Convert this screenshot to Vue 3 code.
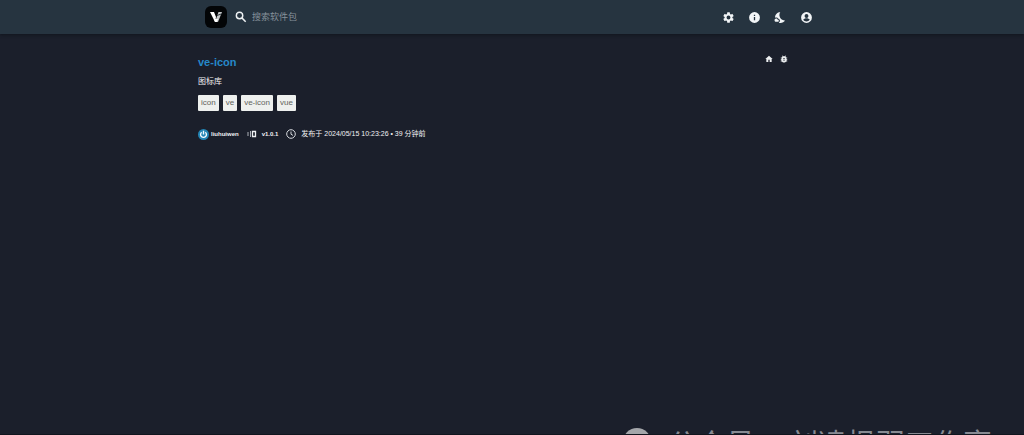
<script setup>
import { ref } from 'vue'

const query = ref('')
const tags = ['icon', 've', 've-icon', 'vue']
const actions = [
  { label: '设置', d: 'M19.14 12.94a7 7 0 0 0 0-1.88l2.03-1.58a.5.5 0 0 0 .12-.61l-1.92-3.32a.5.5 0 0 0-.59-.22l-2.39.96a7 7 0 0 0-1.62-.94l-.36-2.54a.5.5 0 0 0-.48-.41h-3.84a.5.5 0 0 0-.47.41l-.36 2.54a7 7 0 0 0-1.62.94l-2.39-.96a.5.5 0 0 0-.59.22L2.74 8.87a.5.5 0 0 0 .12.61l2.03 1.58a7 7 0 0 0 0 1.88l-2.03 1.58a.5.5 0 0 0-.12.61l1.92 3.32c.12.22.37.29.59.22l2.39-.96c.5.38 1.03.7 1.62.94l.36 2.54c.05.24.24.41.48.41h3.84c.24 0 .44-.17.47-.41l.36-2.54a7 7 0 0 0 1.62-.94l2.39.96c.22.08.47 0 .59-.22l1.92-3.32a.5.5 0 0 0-.12-.61zM12 15.6a3.6 3.6 0 1 1 0-7.2 3.6 3.6 0 0 1 0 7.2z' },
  { label: '信息', d: 'M12 2a10 10 0 1 0 0 20 10 10 0 0 0 0-20zm1.2 15h-2.4v-6h2.4zm0-8h-2.4V6.8h2.4z' },
  { label: '切换主题', d: 'M11.1 12.08C8.77 7.57 10.6 3.6 11.63 2.01 6.27 2.2 1.98 6.59 1.98 12c0 .14.02.28.02.42C2.62 12.15 3.29 12 4 12c1.66 0 3.18.83 4.1 2.15C9.77 14.63 11 16.17 11 18c0 1.52-.87 2.83-2.12 3.51.98.32 2.03.5 3.11.5 3.5 0 6.58-1.8 8.37-4.52-2.35.23-6.98-.97-9.26-5.41zM7 16h-.18C6.4 14.84 5.3 14 4 14c-1.66 0-3 1.34-3 3s1.34 3 3 3h3c1.1 0 2-.9 2-2s-.9-2-2-2z' },
  { label: '账户', d: 'M12 2a10 10 0 1 0 0 20 10 10 0 0 0 0-20zm0 3.5a3.6 3.6 0 1 1 0 7.2 3.6 3.6 0 0 1 0-7.2zm0 14c-2.5 0-4.7-1.2-6-3.2.1-2 4-3.1 6-3.1s5.9 1.1 6 3.1a7.2 7.2 0 0 1-6 3.2z' }
]
</script>

<template>
  <div class="page">
    <header class="topbar">
      <div class="topbar-inner">
        <a class="logo" href="#" aria-label="首页">
          <svg viewBox="0 0 22 22">
            <rect width="22" height="22" rx="6" fill="#030507" />
            <path d="M5 6h4l2 5-1 5z" fill="#fff" />
            <path d="M10 16l3.5-10H17l-4 10z" fill="#c4c7c9" />
            <path d="M9 13h4l-1.2 3H10z" fill="#fff" />
            <path d="M12 9.5l4.2-1.5" stroke="#30383d" />
          </svg>
        </a>
        <form class="search" role="search" @submit.prevent>
          <svg viewBox="0 0 24 24" class="search-icon" aria-hidden="true">
            <circle cx="9.5" cy="9.5" r="5.5" />
            <path d="M13.5 13.5l6.5 6.5" />
          </svg>
          <input v-model="query" type="text" placeholder="搜索软件包" aria-label="搜索软件包" />
        </form>
        <nav class="actions">
          <button v-for="a in actions" :key="a.label" type="button" :aria-label="a.label">
            <svg viewBox="0 0 24 24"><path :d="a.d" fill-rule="evenodd" /></svg>
          </button>
        </nav>
      </div>
    </header>

    <main class="package">
      <div class="title-row">
        <h1>ve-icon</h1>
        <div class="links">
          <a href="#" aria-label="主页"><svg viewBox="0 0 24 24"><path d="M10 21v-7h4v7h6v-9h3L12 2 1 12h3v9z" /></svg></a>
          <a href="#" aria-label="问题反馈"><svg viewBox="2 2 20 20"><path d="M20 8h-2.81c-.45-.78-1.07-1.45-1.82-1.96L17 4.41 15.59 3l-2.17 2.17C12.96 5.06 12.49 5 12 5s-.96.06-1.41.17L8.41 3 7 4.41l1.62 1.63C7.88 6.55 7.26 7.22 6.81 8H4v2h2.09c-.05.33-.09.66-.09 1v1H4v2h2v1c0 .34.04.67.09 1H4v2h2.81c1.04 1.79 2.97 3 5.19 3s4.15-1.21 5.19-3H20v-2h-2.09c.05-.33.09-.66.09-1v-1h2v-2h-2v-1c0-.34-.04-.67-.09-1H20V8zm-6 8h-4v-2h4v2zm0-4h-4v-2h4v2z" /></svg></a>
        </div>
      </div>
      <p class="description">图标库</p>
      <ul class="tags">
        <li v-for="tag in tags" :key="tag">{{ tag }}</li>
      </ul>
      <div class="meta">
        <span class="meta-item author">
          <svg viewBox="0 0 12 12" aria-hidden="true">
            <circle cx="6" cy="6" r="6" fill="#2385b5" />
            <path d="M4 3.5a3.2 3.2 0 1 0 4 0M6 2v4" fill="none" stroke="#f5fbff" stroke-width="1.5" />
          </svg>
          liuhuiwen
        </span>
        <span class="meta-item version">
          <svg viewBox="0 0 10 8" aria-hidden="true">
            <path d="M5.5 1.5h3v5h-3z" fill="none" stroke="#eef0f2" stroke-width="1.3" />
            <path d="M3.5 1v6M1 2v4" fill="none" stroke="#adb1b8" />
          </svg>
          v1.0.1
        </span>
        <span class="meta-item published">
          <svg viewBox="0 0 10 10" aria-hidden="true">
            <path d="M5 .7a4.3 4.3 0 1 0 0 8.6 4.3 4.3 0 0 0 0-8.6M5 2.5v2.7l2 1.2" fill="none" stroke="#d5d8dc" />
          </svg>
          发布于 2024/05/15 10:23:26 • 39 分钟前
        </span>
      </div>
    </main>

    <div class="watermark">
      <svg viewBox="0 0 28 28" aria-hidden="true">
        <circle cx="14" cy="14" r="14" fill="#a4a6aa" />
        <circle cx="9" cy="9" r="2" fill="#4a4d55" />
        <circle cx="19" cy="9" r="2" fill="#4a4d55" />
      </svg>
      <span>公众号</span><span class="dot">·</span><span>刘凌枫羽工作室</span>
    </div>
  </div>
</template>

<style>
body {
  background: #1b1f2b;
}
</style>

<style scoped>
.page {
  position: relative;
  min-height: 100vh;
  overflow: hidden;
  box-sizing: border-box;
  background: #1b1f2b;
  border-bottom: 1px solid #11151e;
  color: #f1f2f4;
  font-family: "Liberation Sans", "Noto Sans CJK SC", sans-serif;
}
.topbar {
  background: #263440;
  box-shadow: 0 1px 3px #10151d;
}
.topbar-inner,
.package {
  box-sizing: border-box;
  max-width: 628px;
  margin: 0 auto;
}
.topbar-inner {
  display: flex;
  align-items: center;
  height: 34px;
  padding: 0 13px 0 7px;
}
svg {
  display: block;
  flex: none;
}
.logo svg {
  width: 22px;
  height: 22px;
}
.search {
  display: flex;
  flex: 1;
  align-items: center;
  gap: 4px;
  margin-left: 7px;
}
.search-icon {
  width: 14px;
  height: 14px;
  fill: none;
  stroke: #eef1f3;
  stroke-width: 2.5;
}
.search input {
  flex: 1;
  min-width: 0;
  padding: 0;
  border: 0;
  outline: 0;
  background: transparent;
  color: #eef1f3;
  font: inherit;
  font-size: 9px;
}
.search input::placeholder {
  color: #87929b;
  opacity: 1;
}
.actions {
  display: flex;
  gap: 13px;
}
button {
  padding: 0;
  border: 0;
  background: none;
  cursor: pointer;
}
.actions svg {
  width: 13px;
  height: 13px;
  fill: #f2f5f7;
}
.package {
  padding: 21px 0 0;
}
.title-row {
  display: flex;
  justify-content: space-between;
  padding-right: 38px;
}
h1 {
  margin: 0;
  color: #2688c9;
  font-size: 11px;
  line-height: 14px;
}
.links {
  display: flex;
  gap: 7px;
}
.links svg {
  width: 8px;
  height: 8px;
  fill: #eceef0;
}
.description {
  margin: 7px 0 0;
  font-size: 8px;
  line-height: 12px;
}
.tags {
  display: flex;
  gap: 4px;
  margin: 7px 0 0;
  padding: 0;
  list-style: none;
}
.tags li {
  padding: 0 3px;
  border-radius: 1px;
  background: #eef0ee;
  color: #62645c;
  font-size: 8px;
  line-height: 16px;
}
.meta {
  display: flex;
  align-items: center;
  margin-top: 17px;
  font-size: 7px;
  line-height: 12px;
}
.meta-item {
  display: flex;
  align-items: center;
}
.author,
.version {
  font-size: 6px;
  font-weight: bold;
}
.author {
  gap: 2px;
}
.author svg {
  width: 11px;
  height: 11px;
}
.version {
  gap: 5px;
  margin-left: 8px;
}
.version svg {
  width: 10px;
  height: 8px;
}
.published {
  gap: 5px;
  margin-left: 8px;
}
.published svg {
  width: 10px;
  height: 10px;
}
.watermark {
  position: absolute;
  right: 32px;
  bottom: -29px;
  display: flex;
  align-items: center;
  color: #878a92;
  font-size: 29px;
  line-height: 36px;
  white-space: nowrap;
}
.watermark svg {
  width: 28px;
  height: 28px;
  margin: 0 17px 6px 0;
}
.dot {
  width: 34px;
  text-align: center;
}
</style>
